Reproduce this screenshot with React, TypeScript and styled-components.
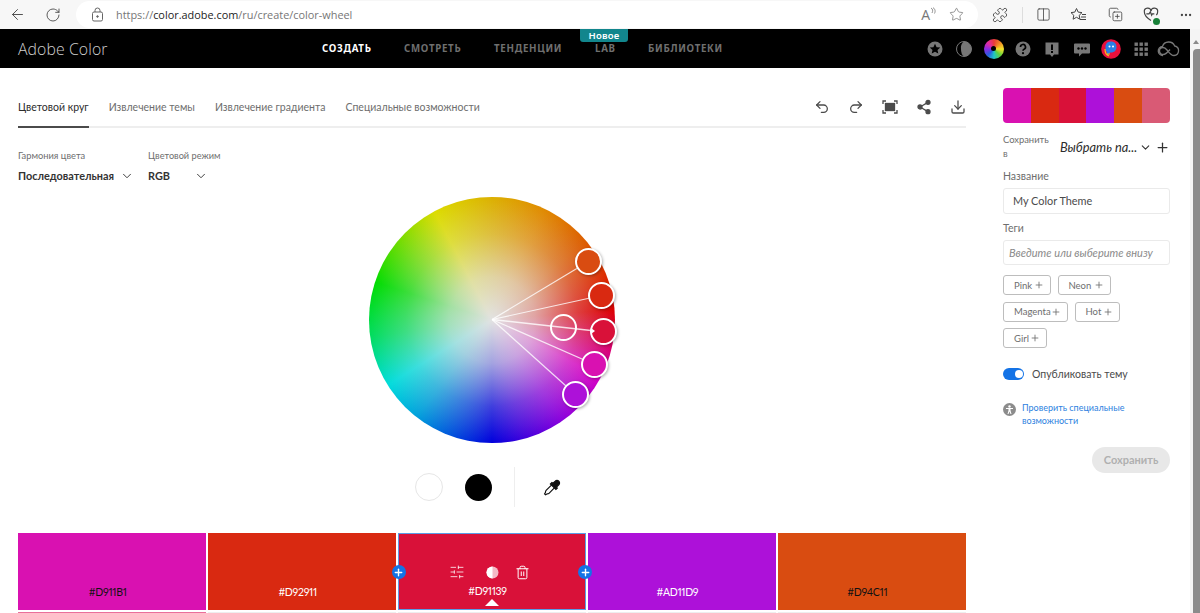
import React from "react";
import styled, { createGlobalStyle } from "styled-components";
import { ArrowLeft, RotateCw, Star, Columns2, CopyPlus, Undo2, Redo2, Share2, Download, SlidersHorizontal, Trash2, Plus, ChevronDown, MoreHorizontal, Puzzle } from "lucide-react";

const Global = createGlobalStyle`
  html, body { margin: 0; padding: 0; background: #fff; }
  * { box-sizing: border-box; }
  body { font-family: Lato, "Noto Sans", sans-serif; overflow: hidden; }
`;

const Shell = styled.div`
  width: 1200px; height: 613px; overflow: hidden; display: flex; flex-direction: column;
`;
const BrowserBar = styled.header`
  height: 29px; flex: none; background: #f7f7f7; display: flex; align-items: center; color: #444;
`;
const BarButton = styled.span<{ $w: number; $pad?: number }>`
  width: ${p => p.$w}px; padding-left: ${p => p.$pad ?? 0}px; flex: none; display: flex; justify-content: center; align-items: center; position: relative;
`;
const AddressPill = styled.div`
  width: 904px; height: 27px; margin-left: 5px; background: #fff; border-radius: 14px; display: flex; align-items: center; padding-left: 15px;
`;
const Url = styled.div`
  margin-left: 12px; font-size: 10.9px; color: #767676; font-family: "Open Sans", sans-serif; flex: 1; white-space: nowrap;
  b { font-weight: 400; color: #222; }
`;
const ReadAloud = styled.span`
  font-size: 14px; color: #777; margin-right: 2px; font-family: "Open Sans", sans-serif; display: flex; align-items: flex-start; line-height: 16px;
`;
const Divider = styled.span`
  width: 1px; height: 16px; background: #ddd; flex: none;
`;
const CheckDot = styled.span`
  position: absolute; right: 5px; bottom: -3px; width: 7px; height: 7px; border-radius: 50%; background: #188038;
`;
const Body = styled.div`
  flex: 1; display: flex; min-height: 0;
`;
const Page = styled.div`
  flex: 1; min-width: 0; display: flex; flex-direction: column;
`;
const Scrollbar = styled.div`
  width: 10px; flex: none; background: #f4f4f4; display: flex; flex-direction: column; align-items: flex-end; padding-top: 8px;
  &::before { content: ""; width: 0; height: 0; border: 3px solid transparent; border-bottom: 4px solid #8a8a8a; margin-right: 1px; margin-bottom: 5px; }
`;
const Thumb = styled.div`
  width: 7px; flex: 1; background: #8b8b8b; border-radius: 4px 0 0 0;
`;
const NavBar = styled.nav`
  height: 39px; flex: none; background: #000; display: flex; align-items: center; padding: 0 10px 0 18px; position: relative;
`;
const Brand = styled.div`
  font-family: "Open Sans", sans-serif; font-size: 15.8px; font-weight: 300; color: #cfcfcf; width: 304px; letter-spacing: .1px;
`;
const NavLinks = styled.div`
  display: flex; flex: 1; align-items: center;
`;
const NavLink = styled.span<{ $active?: boolean; $w: number }>`
  width: ${p => p.$w}px; font-family: "Noto Sans", sans-serif; font-size: 9.7px; font-weight: 700; letter-spacing: .72px; color: ${p => p.$active ? "#fff" : "#6f6f6f"}; white-space: nowrap;
`;
const NewBadge = styled.span`
  position: absolute; left: 580px; top: 0; width: 48px; height: 13px; background: #12868d; color: #fff; font-family: "Noto Sans", sans-serif; font-size: 9.5px; font-weight: 600; text-align: center; line-height: 13px; border-radius: 0 0 3px 3px; letter-spacing: .2px;
`;
const NavIcons = styled.div`
  display: flex; align-items: center; gap: 9.4px;
`;
const NavIcon = styled.svg<{ $wide?: boolean }>`
  width: ${p => p.$wide ? 24 : 20}px; height: 20px; flex: none; display: block; margin-left: ${p => p.$wide ? -4 : 0}px;
`;
const RainbowDot = styled.span`
  width: 20px; height: 20px; border-radius: 50%; flex: none; position: relative; display: block;
  background: conic-gradient(#e83a3a, #f08a24, #f4e12b, #5fd13a, #1ec7c7, #2a5ce0, #8a2be2, #e02ba0, #e83a3a);
  &::after { content: ""; position: absolute; inset: 7.5px; border-radius: 50%; background: #000; }
`;
const Content = styled.main`
  flex: 1; display: flex; min-height: 0; background: #fff;
`;
const MainCol = styled.section`
  width: 966px; flex: none; padding-left: 18px; display: flex; flex-direction: column;
`;
const TabRow = styled.div`
  height: 40px; margin-top: 20px; flex: none; display: flex; align-items: flex-start; border-bottom: 2px solid #eee; justify-content: space-between;
`;
const Tabs = styled.div`
  display: flex; gap: 20px; height: 40px;
`;
const Tab = styled.span<{ $active?: boolean }>`
  font-size: 10.5px; height: 40px; line-height: 39px; color: ${p => p.$active ? "#2c2c2c" : "#6e6e6e"}; white-space: nowrap;
  border-bottom: 2px solid ${p => p.$active ? "#4b4b4b" : "transparent"};
`;
const Tools = styled.div`
  display: flex; align-items: center; color: #4b4b4b; height: 38px; gap: 18px;
`;
const Selectors = styled.div`
  display: flex; margin-top: 21px; height: 34px; flex: none;
`;
const Selector = styled.div<{ $w: number }>`
  width: ${p => p.$w}px; display: flex; flex-direction: column; gap: 7px;
`;
const SmallLabel = styled.label<{ $size?: number }>`
  display: block; font-size: ${p => p.$size ?? 10.5}px; line-height: 13px; color: #6e6e6e; white-space: nowrap;
`;
const SelectValue = styled.div<{ $w: number }>`
  display: flex; align-items: center; justify-content: space-between; font-size: 10.9px; font-weight: 700; color: #333; line-height: 14px; width: ${p => p.$w}px;
`;
const WheelWrap = styled.div`
  align-self: center; width: 246px; height: 246px; position: relative; margin-top: 14px; flex: none;
`;
const WheelDisc = styled.div`
  position: absolute; inset: 0; border-radius: 50%;
  background:
    radial-gradient(circle closest-side, rgba(226,226,226,1) 0%, rgba(226,226,226,.72) 35%, rgba(226,226,226,.28) 70%, rgba(226,226,226,0) 100%),
    conic-gradient(from 0deg, #dcb000 0deg, #e08a00 25deg, #dc5c00 50deg, #dc0000 85deg, #d600c4 118deg, #8a00dc 145deg, #4000dc 165deg, #0000dc 180deg, #00a0dc 218deg, #00dcdc 238deg, #00dc60 262deg, #00dc00 288deg, #70dc00 310deg, #dcdc00 332deg, #dcb000 360deg);
`;
const WheelLines = styled.svg`
  position: absolute; inset: 0; width: 100%; height: 100%; pointer-events: none;
`;
const Handle = styled.span<{ $c: string; $x: number; $y: number; $shadow?: boolean; $notch?: boolean }>`
  position: absolute; left: ${p => p.$x - 13.5}px; top: ${p => p.$y - 13.5}px; width: 27px; height: 27px; border-radius: 50%;
  background: ${p => p.$c}; border: 2px solid #fff;
  box-shadow: ${p => p.$shadow ? "1px 1px 3px rgba(0,0,0,.3)" : "none"};
  &::after {
    content: ""; display: ${p => p.$notch ? "block" : "none"}; position: absolute; left: -1px; top: 8px; width: 0; height: 0;
    border: 3px solid transparent; border-left: 4px solid #fff;
  }
`;
const PickerRow = styled.div`
  display: flex; align-items: center; height: 40px; margin-top: 24px; flex: none; padding-left: 397px;
`;
const WhiteDot = styled.span`
  width: 28px; height: 28px; border-radius: 50%; background: #fff; border: 1.5px solid #e6e6e6;
`;
const BlackDot = styled.span`
  width: 27px; height: 27px; border-radius: 50%; background: #000; margin-left: 22px;
`;
const VLine = styled.span`
  width: 1px; height: 40px; background: #eee; margin: 0 28px 0 22px;
`;
const Swatches = styled.div`
  display: grid; grid-template-columns: repeat(5, 1fr); column-gap: 1.5px; row-gap: 1.5px; margin-top: 26px; flex: none; width: 948px; position: relative;
`;
const Swatch = styled.div<{ $c: string; $fg: string; $sel?: boolean }>`
  height: 77px; background: ${p => p.$c}; color: ${p => p.$fg}; position: relative;
  border: ${p => p.$sel ? "1px solid #5b9be6" : "none"}; display: flex; align-items: flex-end; justify-content: center;
  padding: 0 9px 12px 0; font-size: 10.5px; font-weight: 400; letter-spacing: -.3px; font-variant-numeric: proportional-nums;
`;
const NextRowEdge = styled.div<{ $c: string }>`
  height: 2px; background: ${p => p.$c};
`;
const SwatchTools = styled.div`
  position: absolute; left: 50px; top: 30px; color: #fff; display: flex; align-items: center; height: 16px;
`;
const ToolSlot = styled.span<{ $w: number; $pad?: number }>`
  width: ${p => p.$w}px; padding-left: ${p => p.$pad ?? 0}px; display: flex; justify-content: center;
`;
const Pointer = styled.span`
  position: absolute; left: 50%; bottom: 3px; transform: translateX(-50%); width: 0; height: 0;
  border: 7px solid transparent; border-top: 0; border-bottom: 7px solid #fff;
`;
const AddDot = styled.span<{ $side: "l" | "r" }>`
  position: absolute; top: 31px; ${p => p.$side === "l" ? "left: -7px" : "right: -7px"}; width: 14px; height: 14px; border-radius: 50%; background: #1473e6; color: #fff;
  display: flex; align-items: center; justify-content: center; z-index: 2;
`;
const SideCol = styled.aside`
  width: 167px; flex: none; margin-left: 37px; padding-top: 20px; display: flex; flex-direction: column;
`;
const Palette = styled.div`
  display: flex; height: 35px; border-radius: 4px; overflow: hidden; flex: none;
`;
const PaletteCell = styled.span<{ $c: string }>`
  flex: 1; background: ${p => p.$c};
`;
const SaveRow = styled.div`
  display: flex; align-items: center; margin-top: 9px; height: 30px;
`;
const SaveLabel = styled.span`
  width: 57px; padding-right: 10px; font-size: 9.4px; line-height: 14.5px; color: #6e6e6e; flex: none;
`;
const SaveValue = styled.span`
  font-style: italic; font-size: 12.8px; font-weight: 400; color: #2c2c2c; flex: 1; white-space: nowrap;
`;
const FieldLabel = styled(SmallLabel)`
  margin-top: 8px; margin-bottom: 5px;
`;
const Field = styled.div<{ $ph?: boolean }>`
  height: ${p => p.$ph ? 25 : 26}px; border: 1px solid #eaeaea; border-radius: 3px; display: flex; align-items: center; padding-left: ${p => p.$ph ? 5 : 9}px; padding-bottom: ${p => p.$ph ? 0 : 2}px;
  font-size: ${p => p.$ph ? 11 : 10.9}px; color: ${p => p.$ph ? "#8a8a8a" : "#4b4b4b"}; font-style: ${p => p.$ph ? "italic" : "normal"}; white-space: nowrap; overflow: hidden;
`;
const TagWrap = styled.div`
  display: flex; flex-wrap: wrap; gap: 6.5px; margin-top: 10px; width: 160px;
`;
const Tag = styled.span<{ $w: number }>`
  width: ${p => p.$w}px; height: 20px; border: 1px solid #bdbdbd; border-radius: 3px; font-size: 9.5px; color: #6e6e6e; display: flex; align-items: center; justify-content: space-between; padding: 0 6px 0 10px;
  svg { flex: none; }
`;
const ToggleRow = styled.div`
  display: flex; align-items: center; margin-top: 19px; height: 14px; gap: 8px; font-size: 10.5px; color: #4b4b4b; white-space: nowrap;
`;
const Toggle = styled.span`
  width: 21px; height: 12px; border-radius: 6px; background: #1473e6; position: relative; flex: none;
  &::after { content: ""; position: absolute; right: 1.5px; top: 2px; width: 8px; height: 8px; border-radius: 50%; background: #fff; }
`;
const LinkRow = styled.div`
  display: flex; margin-top: 21px; gap: 6px;
`;
const InfoDot = styled.span`
  width: 13px; height: 13px; border-radius: 50%; background: #8c8c8c; flex: none; margin-top: 1px; display: flex; align-items: center; justify-content: center;
`;
const LinkText = styled.a`
  font-size: 9px; line-height: 12.5px; color: #2d7fe0; width: 130px;
`;
const SaveBtn = styled.button`
  align-self: flex-end; margin-top: 20px; width: 78px; height: 26px; border: none; border-radius: 13px; background: #e8e8e8; color: #b0b0b0; font: 700 11px Lato, sans-serif; padding: 0 0 2px;
`;

const handles = [
  { x: 219.5, y: 64.5, c: "#D94C11", s: true }, { x: 232.5, y: 98.5, c: "#D92911", s: true },
  { x: 194.5, y: 130, c: "transparent", s: false }, { x: 234.5, y: 134, c: "#D91139", s: true, n: true },
  { x: 225.5, y: 167.5, c: "#D911B1", s: true }, { x: 206.5, y: 197.5, c: "#AD11D9", s: true },
];
const lineEnds = [[219.5, 64.5, 1.2], [232.5, 98.5, 1.2], [222, 133.5, 1.6], [225.5, 167.5, 1.2], [206.5, 197.5, 1.2]];
const palette = ["#D911B1", "#D92911", "#D91139", "#AD11D9", "#D94C11", "#D95A75"];

const FitIcon = () => (
  <svg width="16" height="16" viewBox="0 0 16 16" fill="none" stroke="#4b4b4b" strokeWidth="1.3">
    <path d="M1 5V2h3M12 2h3v3M15 11v3h-3M4 14H1v-3" /><rect x="3.5" y="4.5" width="9" height="7" fill="#4b4b4b" />
  </svg>
);
const ContrastIcon = () => (
  <svg width="13" height="13" viewBox="0 0 13 13"><circle cx="6.5" cy="6.5" r="6" fill="#f4b9c6" /><path d="M6.5.5a6 6 0 0 0 0 12z" fill="#fff" /></svg>
);
const Eyedropper = () => (
  <svg width="19" height="19" viewBox="0 0 19 19" fill="none" stroke="#111" strokeWidth="1.2">
    <path d="M12.2 3.2a2.4 2.4 0 0 1 3.600 3.600l-2.300 2.300.9.900-1.500 1.500-5.500-5.500 1.500-1.500.9.900z" fill="#111" />
    <path d="M8.700 6.800l-5.600 5.600c-.6.600-.6 1.300-.7 2.200l-.8 1.200 1 1 1.200-.8c.9-.1 1.600-.1 2.200-.7l5.600-5.600" />
  </svg>
);

export default function App() {
  return (
    <Shell>
      <Global />
      <BrowserBar>
        <BarButton $w={34}><ArrowLeft size={17} strokeWidth={1.3} /></BarButton>
        <BarButton $w={37}><RotateCw size={16} strokeWidth={1.3} /></BarButton>
        <AddressPill>
          <svg width="13" height="15" viewBox="0 0 13 15" fill="none" stroke="#666"><rect x="1.5" y="5" width="10" height="9" rx="1.5" /><path d="M4 5V3.5a2.5 2.5 0 0 1 5 0V5" /><circle cx="6.5" cy="9.5" r=".8" fill="#666" /></svg>
          <Url>https://<b>color.adobe.com</b>/ru/create/color-wheel</Url>
          <ReadAloud>A<svg width="6" height="9" viewBox="0 0 6 9" fill="none" stroke="#777" strokeWidth=".8"><path d="M1 1c2 1 2 3 1 5M3 .5c2.5 2 2.5 4 1.500 6" /></svg></ReadAloud>
          <BarButton $w={36}><Star size={15} strokeWidth={1.1} color="#666" /></BarButton>
          <span style={{ width: 4 }} />
        </AddressPill>
        <BarButton $w={44}><Puzzle size={16} strokeWidth={1.3} /></BarButton>
        <Divider />
        <BarButton $w={40}><Columns2 size={15} strokeWidth={1.3} /></BarButton>
        <BarButton $w={30}>
          <svg width="17" height="16" viewBox="0 0 17 16" fill="none" stroke="#444" strokeWidth="1"><path d="M6.5 1.5l1.700 3.600 3.800.5-2.800 2.700.7 3.900-3.400-1.900-3.400 1.900.7-3.900L1 5.600l3.800-.5z" /><path d="M12 7.500h4M11 10h5M10 12.500h6" /></svg>
        </BarButton>
        <BarButton $w={44}><CopyPlus size={15} strokeWidth={1.3} /></BarButton>
        <BarButton $w={28}>
          <svg width="16" height="15" viewBox="0 0 24 22" fill="none" stroke="#444" strokeWidth="1.8"><path d="M12 20S2 14 2 7a5 5 0 0 1 10-1 5 5 0 0 1 10 1c0 2-1 4-2 5" /><path d="M5 10h4l2-3 2 5 1-2h3" /></svg>
          <CheckDot />
        </BarButton>
        <BarButton $w={35} $pad={7}><MoreHorizontal size={14} strokeWidth={2} /></BarButton>
      </BrowserBar>
      <Body>
        <Page>
          <NavBar>
            <Brand>Adobe Color</Brand>
            <NavLinks>
              <NavLink $active $w={82}>СОЗДАТЬ</NavLink>
              <NavLink $w={90}>СМОТРЕТЬ</NavLink>
              <NavLink $w={101}>ТЕНДЕНЦИИ</NavLink>
              <NavLink $w={53}>LAB</NavLink>
              <NavLink $w={120}>БИБЛИОТЕКИ</NavLink>
            </NavLinks>
            <NewBadge>Новое</NewBadge>
            <NavIcons>
              <NavIcon viewBox="0 0 20 20"><circle cx="10" cy="10" r="7.5" fill="#777" /><path d="M10 4.800l1.600 3.400 3.700.4-2.800 2.400.8 3.600-3.300-1.900-3.300 1.900.8-3.600-2.800-2.400 3.700-.4z" fill="#000" /></NavIcon>
              <NavIcon viewBox="0 0 20 20"><circle cx="10" cy="10" r="7.5" fill="none" stroke="#777" strokeWidth="1" /><path d="M10 2.500a7.500 7.500 0 0 1 0 15 5 8 0 0 1-3-7.500 8 8 0 0 1 3-7.500z" fill="#777" /></NavIcon>
              <RainbowDot />
              <NavIcon viewBox="0 0 20 20"><circle cx="10" cy="10" r="7.5" fill="#777" /><path d="M7.500 8a2.500 2.500 0 1 1 3.600 2.200c-.8.4-1.100.8-1.100 1.600" fill="none" stroke="#000" strokeWidth="1.7" /><circle cx="10" cy="14.2" r="1.1" fill="#000" /></NavIcon>
              <NavIcon viewBox="0 0 20 20"><path d="M3.500 3.500h13v12h-4.500L10 18l-2-2.500H3.500z" fill="#777" /><rect x="9" y="5.500" width="2" height="5.500" fill="#000" /><rect x="9" y="12" width="2" height="2" fill="#000" /></NavIcon>
              <NavIcon viewBox="0 0 20 20"><path d="M3 4.500h14a1 1 0 0 1 1 1v8a1 1 0 0 1-1 1h-7l-3 3v-3H3a1 1 0 0 1-1-1v-8a1 1 0 0 1 1-1z" fill="#777" /><circle cx="6.500" cy="9.500" r="1.2" /><circle cx="10" cy="9.500" r="1.2" /><circle cx="13.500" cy="9.500" r="1.2" /></NavIcon>
              <NavIcon viewBox="0 0 20 20">
                <circle cx="10" cy="10" r="9.8" fill="#e8103c" />
                <path d="M4.500 8c0-3.300 2.200-5.500 5.500-5.500s5.500 2.200 5.500 5.500-2.200 5.500-5.500 5.500c-1 0-2 .5-2 2H6c0-2 0-3-1.500-4z" fill="#2a7fe6" />
                <circle cx="8.500" cy="7.500" r="1" fill="#fff" /><circle cx="12" cy="7.500" r="1" fill="#fff" />
                <path d="M4 10c0 3 1 6 4 7M6 15h3" stroke="#f0c020" strokeWidth="1.2" fill="none" />
              </NavIcon>
              <NavIcon viewBox="0 0 20 20" fill="#777">
                {[3.5, 8.5, 13.5].flatMap(y => [3.5, 8.5, 13.5].map(x => <rect key={`${x}-${y}`} x={x} y={y} width="3.4" height="3.4" />))}
              </NavIcon>
              <NavIcon $wide viewBox="0 0 24 20" fill="none" stroke="#777" strokeWidth="1.3">
                <path d="M7 16.500a4.500 4.500 0 0 1-.5-9A6.500 6.500 0 0 1 18.700 7a4.800 4.800 0 0 1-.7 9.500c-3 0-5-3-7-5.500-1-1.300-2.500-2.500-4-2.500a3.500 3.500 0 0 0 0 7c3 0 5-2.500 7-5" />
              </NavIcon>
            </NavIcons>
          </NavBar>
          <Content>
            <MainCol>
              <TabRow>
                <Tabs>
                  <Tab $active>Цветовой круг</Tab>
                  <Tab>Извлечение темы</Tab>
                  <Tab>Извлечение градиента</Tab>
                  <Tab>Специальные возможности</Tab>
                </Tabs>
                <Tools>
                  <Undo2 size={16} strokeWidth={1.9} />
                  <Redo2 size={16} strokeWidth={1.9} />
                  <FitIcon />
                  <Share2 size={16} strokeWidth={1.9} fill="currentColor" />
                  <Download size={16} strokeWidth={1.9} />
                </Tools>
              </TabRow>
              <Selectors>
                <Selector $w={130}>
                  <SmallLabel $size={9.3}>Гармония цвета</SmallLabel>
                  <SelectValue $w={116}>Последовательная <ChevronDown size={14} strokeWidth={1.6} /></SelectValue>
                </Selector>
                <Selector $w={100}>
                  <SmallLabel $size={9.2}>Цветовой режим</SmallLabel>
                  <SelectValue $w={60}>RGB <ChevronDown size={14} strokeWidth={1.6} /></SelectValue>
                </Selector>
              </Selectors>
              <WheelWrap>
                <WheelDisc />
                <WheelLines viewBox="0 0 246 246">
                  {lineEnds.map(([x, y, w], i) => (
                    <line key={i} x1="123" y1="122.5" x2={x} y2={y} stroke="rgba(255,255,255,.8)" strokeWidth={w} />
                  ))}
                </WheelLines>
                {handles.map((h, i) => <Handle key={i} $x={h.x} $y={h.y} $c={h.c} $shadow={h.s} $notch={h.n} />)}
              </WheelWrap>
              <PickerRow>
                <WhiteDot />
                <BlackDot />
                <VLine />
                <Eyedropper />
              </PickerRow>
              <Swatches>
                <Swatch $c="#D911B1" $fg="#111">#D911B1</Swatch>
                <Swatch $c="#D92911" $fg="#fff">#D92911</Swatch>
                <Swatch $c="#D91139" $fg="#fff" $sel>
                  <SwatchTools>
                    <ToolSlot $w={16}><SlidersHorizontal size={16} strokeWidth={1.2} /></ToolSlot>
                    <ToolSlot $w={50} $pad={6}><ContrastIcon /></ToolSlot>
                    <ToolSlot $w={16}><Trash2 size={15} strokeWidth={1.6} /></ToolSlot>
                  </SwatchTools>
                  #D91139
                  <Pointer />
                  <AddDot $side="l"><Plus size={11} strokeWidth={3} /></AddDot>
                  <AddDot $side="r"><Plus size={11} strokeWidth={3} /></AddDot>
                </Swatch>
                <Swatch $c="#AD11D9" $fg="#fff">#AD11D9</Swatch>
                <Swatch $c="#D94C11" $fg="#111">#D94C11</Swatch>
                <NextRowEdge $c="#ea6f9a" />
                <NextRowEdge $c="#eee" />
                <NextRowEdge $c="#eee" />
                <NextRowEdge $c="#eee" />
                <NextRowEdge $c="#eee" />
              </Swatches>
            </MainCol>
            <SideCol>
              <Palette>{palette.map(c => <PaletteCell key={c} $c={c} />)}</Palette>
              <SaveRow>
                <SaveLabel>Сохранить в</SaveLabel>
                <SaveValue>Выбрать па...</SaveValue>
                <ChevronDown size={13} strokeWidth={2} color="#333" />
                <Plus size={15} strokeWidth={2} color="#333" style={{ marginLeft: 3 }} />
              </SaveRow>
              <FieldLabel>Название</FieldLabel>
              <Field>My Color Theme</Field>
              <FieldLabel>Теги</FieldLabel>
              <Field $ph>Введите или выберите внизу</Field>
              <TagWrap>
                <Tag $w={48}>Pink <Plus size={10} /></Tag>
                <Tag $w={53}>Neon <Plus size={10} /></Tag>
                <Tag $w={65}>Magenta <Plus size={10} /></Tag>
                <Tag $w={45}>Hot <Plus size={10} /></Tag>
                <Tag $w={44}>Girl <Plus size={10} /></Tag>
              </TagWrap>
              <ToggleRow><Toggle />Опубликовать тему</ToggleRow>
              <LinkRow>
                <InfoDot><svg width="9" height="9" viewBox="0 0 9 9" fill="#fff"><circle cx="4.5" cy="1.5" r="1.2" /><path d="M1 3h7v1H5.500v1.500L6.500 9h-1L4.500 6.500 3.500 9h-1l1-3.500V4H1z" /></svg></InfoDot>
                <LinkText>Проверить специальные возможности</LinkText>
              </LinkRow>
              <SaveBtn>Сохранить</SaveBtn>
            </SideCol>
          </Content>
        </Page>
        <Scrollbar><Thumb /></Scrollbar>
      </Body>
    </Shell>
  );
}
